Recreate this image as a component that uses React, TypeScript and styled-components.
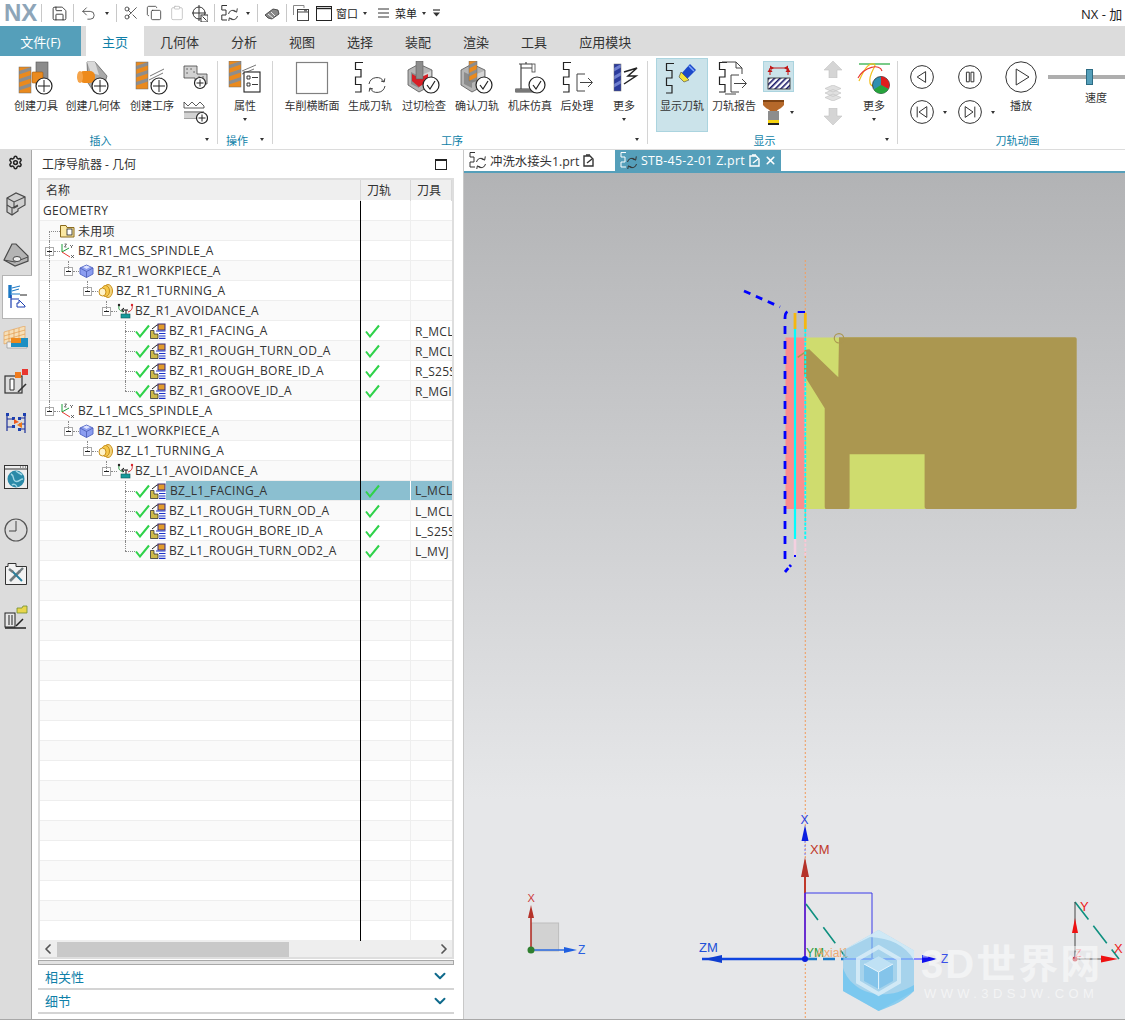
import React from "react";
import styled, { createGlobalStyle } from "styled-components";
import { Save, Undo2, Scissors, Copy, Clipboard, ChevronDown, ChevronLeft, ChevronRight, Settings, X } from "lucide-react";

const FONT = `"Open Sans", "Noto Sans CJK SC", sans-serif`;
const TEAL = "#559fba";

const Global = createGlobalStyle`
  html, body { margin: 0; padding: 0; background: #fff; overflow: hidden; }
  body { font-family: ${FONT}; color: #333; }
  * { box-sizing: border-box; }
`;

const Page = styled.div`
  width: 1125px; height: 1022px; display: flex; flex-direction: column; overflow: hidden;
`;
const TitleBar = styled.div`
  height: 26px; flex: none; display: flex; align-items: center; background: #fff; font-size: 11px; color: #222;
`;
const Logo = styled.div`
  width: 41px; padding-left: 4px; font-family: "Liberation Sans", sans-serif; font-weight: 700; font-size: 24px;
  letter-spacing: 0; color: #8ea5b8;
`;
const BarSep = styled.i<{ $l?: number }>`
  width: 1px; height: 18px; background: #c8c8c8; margin-left: ${(p) => p.$l ?? 0}px; flex: none;
`;
const Tool = styled.span<{ $l: number }>`
  display: inline-flex; align-items: center; margin-left: ${(p) => p.$l}px; flex: none; white-space: nowrap; color: #222;
`;
const Caret = styled.i<{ $c?: string }>`
  display: inline-block; flex: none; width: 0; height: 0; border-left: 2.5px solid transparent; border-right: 2.5px solid transparent;
  border-top: 3px solid ${(p) => p.$c ?? "#333"};
`;
const AppName = styled.div`
  margin-left: auto; font-size: 13px; color: #222; white-space: nowrap; width: 44px; overflow: hidden;
`;

const TabStrip = styled.div`
  height: 30px; flex: none; background: #dcdcdc; display: flex; font-size: 13px;
`;
const FileTab = styled.div`
  width: 81px; margin-right: 5px; background: ${TEAL}; color: #fff; display: flex; align-items: center; justify-content: center;
`;
const RibbonTab = styled.div<{ $on?: boolean }>`
  padding: 0 16px; display: flex; align-items: center; color: ${(p) => (p.$on ? "#0f7fa8" : "#333")};
  background: ${(p) => (p.$on ? "#fff" : "transparent")};
`;

const Ribbon = styled.div`
  height: 94px; flex: none; padding-top: 2px; display: flex; background: #fff; border-bottom: 1px solid #dcdcdc;
`;
const Group = styled.div<{ $w: number }>`
  width: ${(p) => p.$w}px; flex: none; display: flex; flex-direction: column;
`;
const GroupBody = styled.div<{ $pad?: number }>`
  height: 72px; display: flex; padding-left: ${(p) => p.$pad ?? 0}px;
`;
const GroupFoot = styled.div`
  height: 19px; display: flex; align-items: center; color: #0f7fa8; font-size: 11px;
`;
const GroupName = styled.div<{ $shift?: number }>`
  flex: 1; text-align: center; padding-left: ${(p) => p.$shift ?? 0}px;
`;
const FootCaret = styled(Caret)`
  margin: 0 8px 0 4px;
`;
const GroupSep = styled.i`
  width: 1px; flex: none; background: #d4d4d4; margin: 3px 0 5px;
`;
const RibbonBtn = styled.div<{ $w: number; $on?: boolean; $l?: number }>`
  width: ${(p) => p.$w}px; margin-left: ${(p) => p.$l ?? 0}px; height: 74px; flex: none; display: flex; flex-direction: column; align-items: center;
  padding-top: 2px; font-size: 11px; color: #333; white-space: nowrap; border: 1px solid ${(p) => (p.$on ? "#abd4df" : "transparent")};
  background: ${(p) => (p.$on ? "#cbe3ea" : "transparent")};
`;
const IconBox = styled.div`
  height: 34px; display: flex; align-items: center; justify-content: center;
`;
const BtnLabel = styled.div`
  line-height: 15px; margin-top: 3px;
`;
const BtnCaret = styled(Caret)`
  margin-top: 5px;
`;
const SmallStack = styled.div<{ $w: number; $gap: number; $top: number; $l?: number; $pl?: number }>`
  width: ${(p) => p.$w}px; margin-left: ${(p) => p.$l ?? 0}px; padding: ${(p) => p.$top}px 0 0 ${(p) => p.$pl ?? 0}px; flex: none;
  display: flex; flex-direction: column; align-items: ${(p) => (p.$pl ? "flex-start" : "center")}; gap: ${(p) => p.$gap}px;
`;
const HatchBtn = styled.div`
  width: 31px; height: 31px; background: #cbe3ea; border: 1px solid #abd4df; display: flex; align-items: center; justify-content: center;
`;
const CaretRow = styled.div<{ $gap: number }>`
  display: flex; align-items: center; gap: ${(p) => p.$gap}px;
`;
const PlayerCol = styled.div`
  width: 48px; flex: none; padding: 7px 0 0 12px; display: flex; flex-direction: column; gap: 11px;
`;
const PlayCol = styled.div`
  width: 54px; flex: none; padding-top: 3px; display: flex; flex-direction: column; align-items: center; font-size: 11px;
`;
const PlayLabel = styled.div`
  margin-top: 5px; line-height: 15px;
`;
const SpeedCol = styled.div`
  width: 78px; flex: none; padding-top: 11px; display: flex; flex-direction: column; font-size: 11px;
`;
const Track = styled.div`
  position: relative; height: 16px; display: flex; align-items: center;
  &::before { content: ""; flex: 1; height: 4px; background: #aeaeae; }
`;
const Thumb = styled.i`
  position: absolute; left: 38px; top: 0; width: 7px; height: 16px; background: ${TEAL}; border: 1px solid #2d6c84;
`;
const SpeedLabel = styled.div`
  margin-top: 5px; line-height: 15px; text-align: center; padding-left: 18px;
`;

const Main = styled.div`
  height: 870px; flex: none; display: flex; border-bottom: 1px solid #a8a8a8;
`;
const Rail = styled.div`
  width: 32px; flex: none; background: #dcdcdc; border-right: 1px solid #a8a8a8;
`;
const RailItem = styled.div<{ $h: number; $on?: boolean }>`
  height: ${(p) => p.$h}px; display: flex; align-items: center; justify-content: center;
  ${(p) => p.$on && `background:#fff; margin:0 -1px 0 2px; border:1px solid #b4b4b4; border-right:none;`}
`;
const NavPanel = styled.div`
  width: 432px; flex: none; background: #fff; border-right: 1px solid #c8c8c8; padding-left: 6px; padding-right: 9px; display: flex; flex-direction: column;
`;
const NavHead = styled.div`
  height: 28px; flex: none; display: flex; align-items: center; justify-content: space-between; padding: 0 7px 0 4px; font-size: 12px; color: #333;
`;
const MaxBtn = styled.i`
  width: 12px; height: 11px; border: 1px solid #222; border-top-width: 2px; display: block;
`;
const TreeTable = styled.div`
  height: 781px; flex: none; border: 2px solid #dedede; display: flex; flex-direction: column; font-size: 12px; color: #333;
`;
const Columns = "321px 50px 1fr";
const HeadRow = styled.div`
  height: 21px; flex: none; display: grid; grid-template-columns: ${Columns}; background: linear-gradient(#efefef 20px, #fff 20px);
`;
const HeadCell = styled.div<{ $pad: number }>`
  padding-left: ${(p) => p.$pad}px; padding-bottom: 1px; display: flex; align-items: center; border-right: 1px solid #d8d8d8; overflow: hidden; white-space: nowrap;
`;
const Row = styled.div<{ $alt: boolean }>`
  height: 20px; flex: none; display: grid; grid-template-columns: ${Columns}; background: ${(p) => (p.$alt ? "#fafafa" : "#fff")};
  box-shadow: inset 0 -1px 0 #eeeeee;
`;
const NameCell = styled.div<{ $pad: number }>`
  position: relative; display: flex; align-items: center; padding-left: ${(p) => p.$pad}px; border-right: 1px solid #000; white-space: nowrap; min-width: 0;
  letter-spacing: 0.28px;
`;
const Guide = styled.i<{ $x: number; $part: string }>`
  position: absolute; left: ${(p) => p.$x}px; width: 0; border-left: 1px dotted #8a8a8a;
  top: ${(p) => (p.$part === "b" ? "10px" : "0")}; bottom: ${(p) => (p.$part === "t" ? "10px" : "0")};
`;
const Expander = styled.i`
  width: 9px; height: 9px; border: 1px solid #aaa; background: #fff; flex: none; display: flex; align-items: center; justify-content: center;
  &::after { content: ""; width: 5px; height: 1px; background: #222; }
`;
const Connector = styled.i<{ $w: number }>`
  width: ${(p) => p.$w}px; flex: none; border-top: 1px dotted #8a8a8a;
`;
const RowName = styled.span<{ $sel?: boolean; $tight?: boolean }>`
  margin-left: ${(p) => (p.$tight ? -2 : 0)}px; align-self: stretch; display: flex; align-items: center; flex: 1; padding-left: ${(p) => (p.$sel ? 4 : 3)}px;
  background: ${(p) => (p.$sel ? "#8bbfd0" : "transparent")}; margin-bottom: 1px;
`;
const StatusCell = styled.div<{ $sel?: boolean }>`
  display: flex; align-items: center; padding-left: 4px; border-right: 1px solid ${(p) => (p.$sel ? "#fff" : "#eee")};
  background: ${(p) => (p.$sel ? "#8bbfd0" : "transparent")}; margin-bottom: ${(p) => (p.$sel ? 1 : 0)}px;
`;
const ToolCell = styled.div<{ $sel?: boolean }>`
  padding-left: 4px; display: flex; align-items: center; overflow: hidden; white-space: nowrap; min-width: 0; letter-spacing: 0.28px;
  background: ${(p) => (p.$sel ? "#8bbfd0" : "transparent")}; margin-bottom: ${(p) => (p.$sel ? 1 : 0)}px;
`;
const HScroll = styled.div`
  height: 16px; flex: none; background: #eeeeee; display: flex; align-items: center; color: #555;
`;
const HThumb = styled.i`
  width: 232px; height: 15px; background: #c9c9c9; margin-left: 1px; flex: none;
`;
const ScrollFill = styled.i`
  flex: 1;
`;
const Splitter = styled.div`
  height: 5px; flex: none; margin-top: 1px; background: #e2e2e2; border: 1px solid #a8a8a8;
`;
const Section = styled.div`
  height: 24.5px; flex: none; display: flex; align-items: center; justify-content: space-between; padding: 0 5px 0 7px; font-size: 13px; color: #0f7fa8;
  border-bottom: 2px solid #d4d4d4;
`;

const Viewport = styled.div`
  flex: 1; min-width: 0; display: flex; flex-direction: column;
`;
const DocTabs = styled.div`
  height: 23px; flex: none; display: flex; padding-left: 4px; background: #fff; border-bottom: 2px solid ${TEAL}; font-size: 12.4px;
`;
const DocTab = styled.div<{ $w: number; $on?: boolean }>`
  width: ${(p) => p.$w}px; flex: none; display: flex; align-items: center; gap: 4px; padding-left: ${(p) => (p.$on ? 5 : 1)}px;
  background: ${(p) => (p.$on ? TEAL : "#fff")}; color: ${(p) => (p.$on ? "#fff" : "#333")}; white-space: nowrap;
  letter-spacing: ${(p) => (p.$on ? 0.25 : 0)}px;
`;
const Canvas = styled.div`
  flex: 1; min-height: 0; background: linear-gradient(#b2b3b5 0%, #e6e7e9 74%);
`;
const Scene = styled.svg`
  display: block; width: 100%; height: 100%;
`;
const SceneText = styled.text<{ $s?: number }>`
  font-family: "Liberation Sans", "Noto Sans CJK SC", sans-serif; font-size: ${(p) => p.$s ?? 12}px;
`;

/* ---------- icon helpers ---------- */
type P = { children?: React.ReactNode; w?: number; h?: number };
const Ico = ({ children, w = 36, h = 34 }: P) => (
  <svg width={w} height={h} viewBox={`0 0 ${w} ${h}`} style={{ display: "block", flex: "none" }}>{children}</svg>
);
const Mill = ({ x, y, w = 12, h = 26, c = "#ea8a1e", s = "#8d8d8d" }: { x: number; y: number; w?: number; h?: number; c?: string; s?: string }) => (
  <g transform={`translate(${x} ${y})`}>
    <rect width={w} height={h} fill={c} />
    {[0, 8, 16].map((d) => (
      <path key={d} d={`M0 ${d + 4}L${w} ${d}V${d + 3.5}L0 ${d + 7.5}Z`} fill={s} />
    ))}
    <rect width={w} height={h} fill="none" stroke="#6b6b6b" strokeWidth=".5" />
  </g>
);
const Plus = ({ x, y, r = 8 }: { x: number; y: number; r?: number }) => (
  <g>
    <circle cx={x} cy={y} r={r} fill="#fff" stroke="#222" strokeWidth="1.2" />
    <path d={`M${x - r + 2} ${y}H${x + r - 2}M${x} ${y - r + 2}V${y + r - 2}`} stroke="#222" strokeWidth="1" />
  </g>
);
const Check = ({ x, y, r = 8 }: { x: number; y: number; r?: number }) => (
  <g>
    <circle cx={x} cy={y} r={r} fill="#fff" stroke="#222" strokeWidth="1.2" />
    <path d={`M${x - 4} ${y}l3 4l5 -8`} fill="none" stroke="#222" strokeWidth="1.2" />
  </g>
);
const Flow = ({ x, y, s = 1, c = "#222", sw = 1.2 }: { x: number; y: number; s?: number; c?: string; sw?: number }) => (
  <path transform={`translate(${x} ${y}) scale(${s})`} d="M9 .5H1.5V7.5H7V15H1.5V22.5H7V30H1" fill="none" stroke={c} strokeWidth={sw} />
);
const Cycle = ({ x, y, r = 7, c = "#444" }: { x: number; y: number; r?: number; c?: string }) => (
  <g fill="none" stroke={c} strokeWidth="1">
    <path d={`M${x - r} ${y - 1}A${r} ${r} 0 0 1 ${x + r - 1} ${y - 3}`} />
    <path d={`M${x + r} ${y + 1}A${r} ${r} 0 0 1 ${x - r + 1} ${y + 3}`} />
    <path d={`M${x + r - 4} ${y - 4}l3.2 1l.6 -3.6`} />
    <path d={`M${x - r + 4} ${y + 4}l-3.2 -1l-.6 3.6`} />
  </g>
);
const ArrowBox = ({ x, y }: { x: number; y: number }) => (
  <path transform={`translate(${x} ${y})`} d="M8 0H0V17H8M3 8.5H15M11 4L15.5 8.5L11 13" fill="none" stroke="#444" strokeWidth="1" />
);
const GrayBox = () => (
  <g>
    <path d="M2 9L13 3L26 9V24L13 31L2 24Z" fill="#b5b5b5" stroke="#555" strokeWidth=".8" />
    <path d="M5 11L13 15V27L5 23Z" fill="#8c8c8c" />
    <path d="M13 15L25 10V16L13 21Z" fill="#d6d6d6" />
  </g>
);

const IcoCreateTool = () => (
  <Ico><Mill x={1} y={6} /><rect x={18} y={1} width={12} height={22} fill="#8b8b8b" stroke="#555" strokeWidth=".6" /><rect x={14} y={11} width={11} height={11} rx={1} fill="#ea8a1e" stroke="#a05a10" strokeWidth=".6" /><Plus x={26} y={25} /></Ico>
);
const IcoCreateGeo = () => (
  <Ico><path d="M12 1H20L32 15L27 31H19L13 22Z" fill="#a9a9a9" stroke="#555" strokeWidth=".7" /><path d="M12 1H20L24 14L16 12Z" fill="#d9d9d9" /><rect x={4} y={10} width={16} height={12} rx={5} fill="#ee8a1a" /><ellipse cx={5} cy={16} rx={3} ry={6} fill="#f5a44a" /><Plus x={25} y={25} /></Ico>
);
const IcoCreateOp = () => (
  <Ico><Mill x={2} y={1} h={27} /><path d="M16 15L30 8M15 19L29 12M16 22L28 17" stroke="#777" strokeWidth="1" /><Plus x={25} y={25} /></Ico>
);
const IcoSheetPlus = () => (
  <Ico w={26} h={26}><path d="M2 2H15V10H25V20H13V14H2Z" fill="#d2d2d2" stroke="#444" strokeWidth=".8" /><path d="M5 5h.1M9 5h.1M12 8h.1M5 9h.1M17 13h.1M21 13h.1" stroke="#555" strokeWidth="1.4" strokeLinecap="round" /><Plus x={18} y={19} r={5.5} /></Ico>
);
const IcoCrownPlus = () => (
  <Ico w={26} h={26}><path d="M2 3L6 7L10 3L14 7L18 3L22 7V9H2Z" fill="#fff" stroke="#333" strokeWidth=".8" /><path d="M2 13H22M2 19H15" stroke="#333" strokeWidth=".9" /><rect x={2} y={14} width={17} height={5} fill="#d2d2d2" /><Plus x={20} y={19} r={5.5} /></Ico>
);
const IcoProps = () => (
  <Ico w={34}><Mill x={1} y={0} h={26} /><path d="M14 10L28 4M14 13L26 8" stroke="#777" strokeWidth="1" /><rect x={16} y={11} width={16} height={20} fill="#fff" stroke="#222" strokeWidth="1.1" /><path d="M19 15h3v3h-3zM19 22h3v3h-3zM24 16.5h6M24 23.5h6" fill="none" stroke="#222" strokeWidth=".9" /></Ico>
);
const IcoSquare = () => (
  <Ico><rect x={2.5} y={1.5} width={31} height={31} fill="#fff" stroke="#808080" strokeWidth="1.2" /></Ico>
);
const IcoGen = () => (
  <Ico><Flow x={2} y={1} /><Cycle x={25} y={24} r={8} /></Ico>
);
const IcoGouge = () => (
  <Ico><GrayBox /><path d="M6 13L13 17L22 13V20L13 26L6 20Z" fill="#d81f26" /><rect x={10} y={0} width={7} height={18} fill="#8d8d8d" stroke="#555" strokeWidth=".5" /><Check x={25} y={24} /></Ico>
);
const IcoVerify = () => (
  <Ico><GrayBox /><Mill x={10} y={0} w={8} h={20} /><Check x={25} y={24} /></Ico>
);
const IcoSim = () => (
  <Ico><path d="M4 31H26V28H4ZM9 28V3H7V3H20M14 3V1M9 7H20M21 4V11" fill="none" stroke="#444" strokeWidth="1.2" /><rect x={3} y={28} width={24} height={3} fill="#777" /><rect x={20} y={3} width={3} height={8} fill="#fff" stroke="#444" strokeWidth=".8" /><Check x={25} y={24} /></Ico>
);
const IcoPost = () => (
  <Ico><Flow x={3} y={1} /><ArrowBox x={18} y={13} /></Ico>
);
const IcoMoreOp = () => (
  <Ico><Mill x={8} y={3} w={7} h={27} c="#2a3a9c" s="#6f7fd0" /><path d="M18 11L31 7L22 15H30L18 23" fill="none" stroke="#222" strokeWidth="1.5" /></Ico>
);
const IcoShowPath = () => (
  <Ico w={40}><Flow x={3} y={2} /><path d="M19 13L28 3L34 9L25 18Z" fill="#1c49c9" /><path d="M19 11L27 19L22 21L17 16Z" fill="#f2e13a" stroke="#444" strokeWidth=".6" /><path d="M27 5L32 10" stroke="#7ea7ff" strokeWidth="1.5" /></Ico>
);
const IcoReport = () => (
  <Ico><Flow x={2} y={1} /><path d="M6 1H20L26 7V13M20 1V7H26" fill="none" stroke="#444" strokeWidth="1" /><path d="M9 33H20" stroke="#444" strokeWidth="1" /><ArrowBox x={15} y={14} /></Ico>
);
const IcoHatch = () => (
  <Ico w={26} h={28}>
    <defs><pattern id="ht" width="4" height="4" patternUnits="userSpaceOnUse" patternTransform="rotate(-45)"><rect width="4" height="4" fill="#fff" /><rect width="4" height="1.6" fill="#1a1a6a" /></pattern></defs>
    <path d="M4 5H22M4 5V12M22 5V12" fill="none" stroke="#c01717" strokeWidth="1" /><path d="M1.5 9H6.5L4 5ZM19.5 9H24.5L22 5ZM4 2.5L8 5L4 7.5ZM22 2.5L18 5L22 7.5Z" fill="#c01717" />
    <rect x={2} y={15} width={22} height={11} fill="url(#ht)" stroke="#222" strokeWidth=".8" />
  </Ico>
);
const IcoHolder = () => (
  <Ico w={21} h={25}><path d="M0 1H21V5C18 9 15 9 14 11H7C6 9 3 9 0 5Z" fill="#b5682a" /><rect x={0} y={0} width={21} height={2} fill="#7d4213" /><rect x={5} y={11} width={11} height={9} fill="#8d8d8d" /><rect x={5} y={20} width={11} height={3} fill="#f5d20f" /><rect x={5} y={23} width={11} height={2} fill="#222" /></Ico>
);
const IcoUp = ({ flip }: { flip?: boolean }) => (
  <Ico w={18} h={17}><path d={flip ? "M5 0H13V8H18L9 17L0 8H5Z" : "M9 0L18 9H13V17H5V9H0Z"} fill="#d5d5d5" stroke="#c4c4c4" strokeWidth=".6" /></Ico>
);
const IcoLayers = () => (
  <Ico w={18} h={16}><path d="M9 0L17 3.5L9 7L1 3.5Z M9 4.5L17 8L9 11.5L1 8Z M9 9L17 12.5L9 16L1 12.5Z" fill="#e0e0e0" stroke="#c4c4c4" strokeWidth=".7" /></Ico>
);
const IcoColors = () => (
  <Ico>
    <path d="M3 3H34" stroke="#1fa83a" strokeWidth="1.2" /><path d="M3 20C10 4 14 2 18 3C22 4 12 12 14 22C15 26 20 26 22 23" fill="none" stroke="#f2c11d" strokeWidth="1.2" /><path d="M2 17C8 6 24 2 26 10" fill="none" stroke="#e8362f" strokeWidth="1.1" />
    <circle cx={25} cy={24} r={8.5} fill="#2f8fb0" stroke="#222" strokeWidth=".7" /><path d="M25 24V15.5A8.5 8.5 0 0 1 32.4 28Z" fill="#e01d1d" /><path d="M25 24L32.4 28A8.5 8.5 0 0 1 17.8 28.5Z" fill="#27a33c" />
  </Ico>
);
const Round = ({ size = 24, kind }: { size?: number; kind: "prev" | "pause" | "play" | "first" | "last" }) => {
  const k = size / 20;
  return (
    <svg width={size} height={size} viewBox="0 0 20 20" style={{ display: "block", flex: "none" }}>
      <circle cx={10} cy={10} r={9.5} fill="#fff" stroke="#333" strokeWidth={1 / k} />
      <g fill="none" stroke="#333" strokeWidth={1 / k}>
        {kind === "prev" && <path d="M13 5.5V14.5L6 10Z" />}
        {kind === "play" && <path d="M7 5V15L15 10Z" />}
        {kind === "pause" && <path d="M7 6h2.4v8H7zM10.8 6h2.4v8h-2.4z" />}
        {kind === "first" && <path d="M14 5.5V14.5L7.5 10ZM6 5.5V14.5" />}
        {kind === "last" && <path d="M6 5.5V14.5L12.5 10ZM14 5.5V14.5" />}
      </g>
    </svg>
  );
};

/* top toolbar */
const IcoMove = () => (
  <Ico w={16} h={18}><circle cx={7} cy={9} r={6} fill="none" stroke="#333" /><path d="M7 1V17M0 9H14" stroke="#333" /><rect x={9} y={11} width={7} height={7} fill="#fff" stroke="#333" /><path d="M10.5 12.5L14.5 16.5" stroke="#333" /></Ico>
);
const IcoFlowCycle = () => (
  <Ico w={17} h={16}><path d="M6 .5H.8V5H5V10H.8V15H6" fill="none" stroke="#333" /><Cycle x={12} y={10} r={4.5} /></Ico>
);
const IcoPencil = () => (
  <Ico w={16} h={14}><path d="M1 9L9 3L14 4L15 8L8 13L4 12Z" fill="#888" stroke="#333" strokeWidth=".8" /><path d="M4 8L9 12M7 6L11 10" stroke="#eee" /></Ico>
);
const IcoWinStack = () => (
  <Ico w={16} h={16}><path d="M.5 10V.5H11V3" fill="none" stroke="#888" /><rect x={4.5} y={4.5} width={11} height={11} fill="#fff" stroke="#444" /><path d="M4.5 7H15.5" stroke="#444" /><path d="M11 5.8h3" stroke="#444" /></Ico>
);
const IcoWin = () => (
  <Ico w={16} h={16}><rect x={.5} y={1.5} width={15} height={14} fill="#fff" stroke="#222" /><path d="M.5 3.5H15.5" stroke="#222" strokeWidth="1.4" /></Ico>
);
const IcoMenu = () => (
  <Ico w={11} h={10}><path d="M0 1H11M0 5H11M0 9H11" stroke="#333" /></Ico>
);
const IcoOverflow = () => (
  <Ico w={7} h={8}><path d="M0 1H7" stroke="#333" strokeWidth="1.2" /><path d="M0 3.5H7L3.5 7.5Z" fill="#333" /></Ico>
);

/* rail */
const RailBlocks = () => (
  <Ico w={20} h={24}><path d="M1 6L10 1L19 5V13L12 17V19L6 23L1 20Z" fill="#cfcfcf" stroke="#4a4a4a" strokeWidth="1.2" /><path d="M1 6L8 10L19 5M8 10V16L12 14M1 13L6 16V23M6 16L12 13" fill="none" stroke="#4a4a4a" strokeWidth="1.1" /></Ico>
);
const RailBracket = () => (
  <Ico w={26} h={24}><path d="M1 17L9 1H13L25 13V18L12 23Z" fill="#b4b4b4" stroke="#4a4a4a" strokeWidth="1.2" /><path d="M1 17L12 19L25 14" fill="none" stroke="#4a4a4a" /><ellipse cx={14} cy={16} rx={4} ry={2.5} fill="#eee" stroke="#4a4a4a" /></Ico>
);
const RailNav = () => (
  <Ico w={22} h={24}><path d="M3 0V13" stroke="#1b78c5" strokeWidth="3.4" /><path d="M5 3L13 1M5 6L12 4M5 9H13" stroke="#1b78c5" /><path d="M13 10H20" stroke="#222" /><path d="M4 14H12M4 10V23" stroke="#1c3fb0" strokeWidth="1.2" /><path d="M10 18H12V15L18 21V22H10Z" fill="#fff" stroke="#1c3fb0" /></Ico>
);
const RailGrid = () => (
  <Ico w={26} h={24}><path d="M1 6L22 0V12L1 18Z" fill="#f6dfb8" stroke="#e0913b" strokeWidth=".5" /><path d="M6 5V17M11 3V16M16 2V14M1 10L22 4M1 14L22 8" stroke="#e0913b" strokeWidth=".6" /><path d="M4 16H24V22H4Z" fill="#f0f0f0" stroke="#777" strokeWidth=".5" /><rect x={8} y={12} width={17} height={9} fill="#1d8fc3" /><rect x={8} y={12} width={10} height={5} fill="#ef8a1c" /></Ico>
);
const RailMachine = () => (
  <Ico w={24} h={26}><rect x={1} y={7} width={17} height={17} fill="#dcdcdc" stroke="#333" strokeWidth="1.2" /><path d="M6 10V21H10V10Z" fill="#fff" stroke="#333" /><path d="M14 23L22 15" stroke="#333" strokeWidth="1.6" /><path d="M11 3H17V9H11Z" fill="#ef7a1c" /><path d="M18 0H24V6H18Z" fill="#e8362f" /></Ico>
);
const RailNet = () => (
  <Ico w={24} h={24}><path d="M3 3V20M3 8H9M3 16H9M21 3V22M15 7H21M15 13H21M15 18H21" stroke="#1c2f99" strokeWidth="1.2" /><path d="M2 2h3v3H2zM8 6h3v3H8zM8 14h3v3H8zM19 2h3v3h-3zM14 6h3v3h-3zM14 17h3v3h-3z" fill="#1c3fb0" /><path d="M10 8L15 11L10 13Z" fill="#ef5b1c" /><path d="M18 11L13 14L18 17Z" fill="#ef7a1c" /></Ico>
);
const RailGlobe = () => (
  <Ico w={24} h={24}><rect x={.5} y={.5} width={23} height={23} fill="#eee" stroke="#333" /><path d="M.5 4H23.5" stroke="#333" /><path d="M16 2h1M18.5 2h1M21 2h1" stroke="#333" /><circle cx={12} cy={14} r={8.5} fill="#2a8aa8" /><path d="M7 9C11 11 8 14 11 16C14 18 16 14 19 14M12 6C14 8 16 8 18 10M8 20C10 18 12 20 13 22" fill="none" stroke="#9fd6e4" strokeWidth="1.4" /></Ico>
);
const RailClock = () => (
  <Ico w={24} h={24}><circle cx={12} cy={12} r={11} fill="#dcdcdc" stroke="#555" strokeWidth="1.2" /><path d="M12 3V13H5" fill="none" stroke="#444" /></Ico>
);
const RailTools = () => (
  <Ico w={22} h={22}><path d="M.5 3.5H3V.5H11V3.5H21.5V21.5H.5Z" fill="#f2f2f2" stroke="#333" /><path d="M5 18L15 8" stroke="#6f7a7e" strokeWidth="2.6" /><path d="M17 18L7 8" stroke="#2a7f9c" strokeWidth="2" /><path d="M4 6L8 9M18 5L14 9" stroke="#6f7a7e" strokeWidth="2.4" /></Ico>
);
const RailFolder = () => (
  <Ico w={24} h={24}><rect x={1} y={8} width={10} height={14} fill="#e8e8e8" stroke="#222" /><path d="M5 10V20M8 10V20" stroke="#222" /><path d="M12 21L19 14M1 23H22" stroke="#222" strokeWidth="1.5" /><path d="M13 3H18L19 1H23V8H13Z" fill="#e9d64c" stroke="#6e8e2e" strokeWidth=".8" /></Ico>
);

/* tree */
const IcoFolder = () => (
  <Ico w={15} h={14}><path d="M.5 1.5H6L7 3.5H14V13H.5Z" fill="#fbe8a2" stroke="#8a6a1c" /><rect x={7} y={5} width={5} height={6} fill="#fff" stroke="#222" strokeWidth=".8" /></Ico>
);
const IcoMcs = () => (
  <Ico w={15} h={16}><path d="M2 1V9" stroke="#1c9c3a" /><path d="M2 9L9 5" stroke="#1c9c3a" /><path d="M2 9L10 14" stroke="#e8362f" /><path d="M4.5 1h2l-2 3h2M10 2l1.5 1.5L13 2M11.5 3.5V5M11 12l3 3M14 12l-3 3" fill="none" stroke="#333" strokeWidth=".7" /></Ico>
);
const IcoCube = () => (
  <Ico w={15} h={14}><path d="M7.5 1L14 4V10L7.5 13.5L1 10V4Z" fill="#8b9df0" stroke="#5a6dc8" /><path d="M1 4L7.5 7.5L14 4M7.5 7.5V13.5" fill="none" stroke="#3f50a8" strokeWidth=".7" /><path d="M4 3L7.5 1.5L11 3L7.5 5Z" fill="#dfe4ff" /></Ico>
);
const IcoRings = () => (
  <Ico w={15} h={14}><ellipse cx={10} cy={7} rx={4.5} ry={6.5} fill="#f3d37a" stroke="#c8901c" /><ellipse cx={7.5} cy={7} rx={4} ry={5.5} fill="#f7c84a" stroke="#c8901c" /><ellipse cx={4.5} cy={8} rx={3.5} ry={4} fill="#fff3c9" stroke="#c8901c" /></Ico>
);
const IcoAvoid = () => (
  <Ico w={17} h={16}><path d="M2 3C1 7 4 8 6 9" fill="none" stroke="#1c9c3a" /><path d="M15 2C16 6 14 8 11 9" fill="none" stroke="#d8262c" /><circle cx={2} cy={2} r={1.2} fill="#222" /><circle cx={15} cy={2} r={1.2} fill="#d8262c" /><path d="M11 7H5M7 5L4.5 7L7 9M9 7V11" fill="none" stroke="#111" /><rect x={4} y={11} width={9} height={4} fill="#169a9a" stroke="#0c5c5c" strokeWidth=".6" /></Ico>
);
const IcoOp = () => (
  <Ico w={16} h={16}><path d="M.5 7.5H4V11H8V15.5H.5Z" fill="#cdb94a" stroke="#222" strokeWidth=".7" /><path d="M2 6L7 2H9" fill="none" stroke="#222" /><rect x={8} y={1} width={7} height={6} fill="#e29c2c" stroke="#3a2a7c" /><path d="M6 8H15.5M9 10.5H15.5M9 13H15.5M9 15.3H15.5" stroke="#1c32c8" strokeWidth="1.2" /></Ico>
);
const GreenCheck = () => (
  <Ico w={15} h={14}><path d="M1 7.5L5 12.5L14 1.5" fill="none" stroke="#2fd24a" strokeWidth="2" /></Ico>
);
const IcoDoc = ({ c }: { c: string }) => (
  <Ico w={11} h={13}><path d="M1 2H7L10 5V12H1Z" fill="none" stroke={c} strokeWidth="1.4" /><path d="M3 1H7M4 9L9 5" stroke={c} strokeWidth="1.4" /></Ico>
);
const IcoDocFlow = ({ c }: { c: string }) => (
  <Ico w={17} h={17}><path d="M6 .5H1V5H5V10H1V15H6" fill="none" stroke={c} /><Cycle x={12} y={11} r={4.5} c={c === "#fff" ? "#333" : c} /></Ico>
);

/* data */
type R = { k: "root" | "unused" | "node" | "op"; name: string; level?: number; tool?: string; icon?: React.ReactNode; guides?: [number, string][]; sel?: boolean };
const spine: [number, string] = [9, "f"];
const tree = (p: string, ops: string[], tools: string[], last: boolean, sel: number): R[] => {
  const g = last ? [] : [spine];
  const out: R[] = [
    { k: "node", level: 0, name: `BZ_${p}_MCS_SPINDLE_A`, icon: <IcoMcs />, guides: last ? [[9, "t"]] : [spine] },
    { k: "node", level: 1, name: `BZ_${p}_WORKPIECE_A`, icon: <IcoCube />, guides: [...g, [28, "t"]] },
    { k: "node", level: 2, name: `BZ_${p}_TURNING_A`, icon: <IcoRings />, guides: [...g, [47, "t"]] },
    { k: "node", level: 3, name: `BZ_${p}_AVOIDANCE_A`, icon: <IcoAvoid />, guides: [...g, [66, "t"]] },
  ];
  ops.forEach((name, i) =>
    out.push({ k: "op", name, tool: tools[i], sel: i === sel, guides: [...g, [85, i === ops.length - 1 ? "t" : "f"]] }),
  );
  return out;
};
const rows: R[] = [
  { k: "root", name: "GEOMETRY" },
  { k: "unused", name: "未用项", guides: [[9, "b"]] },
  ...tree("R1", ["BZ_R1_FACING_A", "BZ_R1_ROUGH_TURN_OD_A", "BZ_R1_ROUGH_BORE_ID_A", "BZ_R1_GROOVE_ID_A"], ["R_MCL", "R_MCL", "R_S25S", "R_MGI"], false, -1),
  ...tree("L1", ["BZ_L1_FACING_A", "BZ_L1_ROUGH_TURN_OD_A", "BZ_L1_ROUGH_BORE_ID_A", "BZ_L1_ROUGH_TURN_OD2_A"], ["L_MCL", "L_MCL", "L_S25S", "L_MVJ"], true, 0),
];
const blanks = Array.from({ length: 37 - rows.length });

const railItems: [number, React.ReactNode, boolean?][] = [
  [24, <Settings size={15} color="#222" strokeWidth={2.4} />],
  [60, <RailBlocks />],
  [41, <RailBracket />],
  [44, <RailNav />, true],
  [38, <RailGrid />],
  [50, <RailMachine />],
  [32, <RailNet />],
  [76, <RailGlobe />],
  [30, <RailClock />],
  [58, <RailTools />],
  [28, <RailFolder />],
];

const tabs = ["几何体", "分析", "视图", "选择", "装配", "渲染", "工具", "应用模块"];

const Btn = ({ w, label, icon, caret, on, l }: { w: number; label: string; icon: React.ReactNode; caret?: boolean; on?: boolean; l?: number }) => (
  <RibbonBtn $w={w} $on={on} $l={l}>
    <IconBox>{icon}</IconBox>
    <BtnLabel>{label}</BtnLabel>
    {caret && <BtnCaret />}
  </RibbonBtn>
);

const TreeRow = ({ r, alt }: { r: R; alt: boolean }) => {
  const lvl = r.level ?? 0;
  const pad = r.k === "root" ? 0 : r.k === "unused" ? 9 : r.k === "op" ? 85 : 5 + 19 * lvl;
  return (
    <Row $alt={alt}>
      <NameCell $pad={pad}>
        {r.guides?.map(([x, part], i) => <Guide key={i} $x={x} $part={part} />)}
        {r.k === "unused" && (<><Connector $w={11} /><IcoFolder /></>)}
        {r.k === "node" && (<><Expander /><Connector $w={6} />{r.icon}</>)}
        {r.k === "op" && (<><Connector $w={10} /><GreenCheck /><IcoOp /></>)}
        <RowName $sel={r.sel} $tight={r.k === "node" && lvl === 3}>{r.name}</RowName>
      </NameCell>
      <StatusCell $sel={r.sel}>{r.tool && <GreenCheck />}</StatusCell>
      <ToolCell $sel={r.sel}>{r.tool}</ToolCell>
    </Row>
  );
};

const CadScene = () => (
  <Scene viewBox="464 173 661 846" preserveAspectRatio="none">
    <path d="M805.3 260V1020" stroke="#f0a066" strokeWidth="1.1" strokeDasharray="2 2" />
    <rect x={806} y={337.5} width={119} height={171.5} fill="#cfdc6e" />
    <rect x={785.5} y={337.5} width={19} height={171.5} fill="#fc8d8d" />
    <path d="M839 337.3H1075Q1076.7 337.3 1076.7 339V507Q1076.7 509 1075 509H926.5Q924.6 509 924.6 507V454.3H849.6V507Q849.6 509 848 509H826Q824.7 509 824.7 507V408.3L804 375V351Q805 349.3 809.3 349.3L838.3 377.3Z" fill="#ab9750" />
    <path d="M797.7 357.3L807.3 350.7" stroke="#ab9750" strokeWidth="1.5" />
    <circle cx={839} cy={338.3} r={4.7} fill="none" stroke="#ab9750" strokeWidth="1.2" />
    <path d="M795 329V539" stroke="#00ffff" strokeWidth="2.2" />
    <path d="M805.3 329V540" stroke="#00ffff" strokeWidth="1.8" strokeDasharray="3 1.5" />
    <path d="M795 313V329M805.3 313V329" stroke="#f5b70f" strokeWidth="2.8" />
    <path d="M795 539V556" stroke="#f4d0e0" strokeWidth="2.6" />
    <path d="M805.3 539V556" stroke="#f7c8d8" strokeWidth="2" strokeDasharray="3 1.5" />
    <g fill="none" stroke="#0000ff" strokeWidth="2.8">
      <path d="M744 291L780 307" strokeDasharray="7 6" />
      <path d="M785 559V318Q785 311 790 311L793 312" strokeDasharray="8 7" />
      <path d="M797.7 312H805" strokeWidth="2" />
      <path d="M785 572L791 565" strokeDasharray="5 2" />
      <path d="M794 556H796" strokeWidth="2" />
    </g>

    {/* left triad */}
    <rect x={531.6} y={923} width={27} height={28} fill="#d2d2d2" stroke="#bdbdbd" strokeWidth="1" />
    <path d="M531 949V915" stroke="#b5332a" strokeWidth="1.6" />
    <path d="M528 918L531 905L534 918Z" fill="#b5332a" />
    <path d="M531 950H566" stroke="#2a6ae0" strokeWidth="1.5" />
    <path d="M564 947L577 950L564 953Z" fill="#1f5fe0" />
    <circle cx={531} cy={950} r={3.5} fill="#2f7f2f" />
    <SceneText x={527.5} y={902} fill="#cc3a3a" $s={11}>X</SceneText>
    <SceneText x={578} y={954} fill="#2a5fe0" $s={12}>Z</SceneText>

    {/* centre triad */}
    <path d="M805 841V857" stroke="#7a7af5" strokeWidth="1" strokeDasharray="2 2" />
    <path d="M801.5 841L805 825L808.5 841Z" fill="#0a1ee0" />
    <SceneText x={800.5} y={824} fill="#2a3fe0" $s={12}>X</SceneText>
    <path d="M805 875V893" stroke="#c0392b" strokeWidth="2" />
    <path d="M801 877L805 857L809 877Z" fill="#b5332a" />
    <SceneText x={810} y={854} fill="#c0392b" $s={13}>XM</SceneText>
    <path d="M805 893V959" stroke="#6a2fd0" strokeWidth="2" />
    <path d="M805 893H872V961" fill="none" stroke="#3a3ae8" strokeWidth="1" />
    <path d="M806 904L847 959" stroke="#0f9080" strokeWidth="1.6" strokeDasharray="20 9" />
    <path d="M702 959H805" stroke="#0f45e0" strokeWidth="2.6" />
    <path d="M722 955L704 959L722 963Z" fill="#0f3ed0" />
    <SceneText x={699} y={952} fill="#2050d8" $s={13}>ZM</SceneText>
    <path d="M805 959H844" stroke="#1a78c8" strokeWidth="2.4" strokeDasharray="12 6" />
    <path d="M844 959H925" stroke="#8a8aff" strokeWidth="2" />
    <path d="M922 955L937 959L922 963Z" fill="#1010ee" />
    <SceneText x={941} y={963} fill="#3a50e8" $s={12}>Z</SceneText>
    <SceneText x={806} y={957} fill="#2a9c3a" $s={12}>YM</SceneText>
    <SceneText x={816} y={957} fill="#f0a060" $s={12} opacity=".85">Axial1</SceneText>
    <circle cx={805} cy={959} r={3} fill="#0a1ee0" />

    {/* right triad */}
    <path d="M1075 902L1119 959" stroke="#0f9080" strokeWidth="1.6" strokeDasharray="22 8" />
    <path d="M1075 902V959" stroke="#444" strokeWidth="1" />
    <path d="M1072 933L1075 918L1078 933Z" fill="#ee1111" />
    <path d="M1075 959H1101" stroke="#888" strokeWidth="1.5" />
    <path d="M1101 955.5L1118 959L1101 962.5Z" fill="#ee1111" />
    <circle cx={1075} cy={959} r={2.5} fill="#c0303a" />
    <SceneText x={1080} y={911} fill="#ee2222" $s={13}>Y</SceneText>
    <SceneText x={1114} y={953} fill="#ee2222" $s={13}>X</SceneText>
    <SceneText x={1075} y={957} fill="#f08a8a" $s={11}>Z</SceneText>

    {/* watermark */}
    <g>
      <path d="M878.6 930L914 950.5V991L878.6 1011L843 991V950.5Z" fill="#7cc6ee" opacity=".6" />
      <path d="M878.6 930L914 950.5V960C905 945 890 938 870 937L843 950.5Z" fill="#d4ebf7" opacity=".9" />
      <path d="M914 991C905 1000 895 1005 878.6 1011L843 991V968C850 990 880 1005 914 985Z" fill="#6cc4f0" opacity=".75" />
      <path d="M878.6 947L899 959V982L878.6 994L858 982V959Z" fill="none" stroke="#dceff9" strokeWidth="4" opacity=".8" />
      <path d="M878.6 956L893 964V981L878.6 989L864 981V964Z" fill="#84c4ea" />
      <path d="M878.6 956L893 964L878.6 972L864 964Z" fill="#bfe1f4" />
      <path d="M878.6 972V989M864 964L878.6 972L893 964" stroke="#e8f5fc" strokeWidth="1" fill="none" />
      <SceneText x={921} y={978} fill="#fff" opacity=".5" $s={40} fontWeight="700" letterSpacing="2">3D世界网</SceneText>
      <SceneText x={924} y={998} fill="#fff" opacity=".55" $s={13} letterSpacing="4.4">WWW.3DSJW.COM</SceneText>
    </g>
  </Scene>
);

export default function App() {
  return (
    <Page>
      <Global />
      <TitleBar>
        <Logo>NX</Logo>
        <BarSep />
        <Tool $l={9}><Save size={17} color="#222" strokeWidth={1.2} /></Tool>
        <BarSep $l={5} />
        <Tool $l={6}><Undo2 size={17} color="#333" strokeWidth={1.1} /></Tool>
        <Tool $l={8}><Caret /></Tool>
        <BarSep $l={7} />
        <Tool $l={6}><Scissors size={16} color="#333" strokeWidth={1.2} /></Tool>
        <Tool $l={7}><Copy size={16} color="#333" strokeWidth={1.2} /></Tool>
        <Tool $l={7}><Clipboard size={16} color="#bdbdbd" strokeWidth={1.2} /></Tool>
        <Tool $l={7}><IcoMove /></Tool>
        <BarSep $l={6} />
        <Tool $l={6}><IcoFlowCycle /></Tool>
        <Tool $l={8}><Caret /></Tool>
        <BarSep $l={7} />
        <Tool $l={6}><IcoPencil /></Tool>
        <BarSep $l={6} />
        <Tool $l={6}><IcoWinStack /></Tool>
        <Tool $l={7}><IcoWin /></Tool>
        <Tool $l={4}>窗口</Tool>
        <Tool $l={5}><Caret /></Tool>
        <Tool $l={11}><IcoMenu /></Tool>
        <Tool $l={6}>菜单</Tool>
        <Tool $l={5}><Caret /></Tool>
        <Tool $l={7}><IcoOverflow /></Tool>
        <AppName>NX - 加</AppName>
      </TitleBar>

      <TabStrip>
        <FileTab>文件(F)</FileTab>
        <RibbonTab $on>主页</RibbonTab>
        {tabs.map((t) => <RibbonTab key={t}>{t}</RibbonTab>)}
      </TabStrip>

      <Ribbon>
        <Group $w={217}>
          <GroupBody $pad={8}>
            <Btn w={56} label="创建刀具" icon={<IcoCreateTool />} />
            <Btn w={58} label="创建几何体" icon={<IcoCreateGeo />} />
            <Btn w={60} label="创建工序" icon={<IcoCreateOp />} />
            <SmallStack $w={26} $gap={9} $top={6}>
              <IcoSheetPlus />
              <IcoCrownPlus />
            </SmallStack>
          </GroupBody>
          <GroupFoot><GroupName>插入</GroupName><FootCaret /></GroupFoot>
        </Group>
        <GroupSep />
        <Group $w={54}>
          <GroupBody><Btn w={54} label="属性" icon={<IcoProps />} caret /></GroupBody>
          <GroupFoot><GroupName>操作</GroupName><FootCaret /></GroupFoot>
        </Group>
        <GroupSep />
        <Group $w={374}>
          <GroupBody $pad={6}>
            <Btn w={66} label="车削横断面" icon={<IcoSquare />} />
            <Btn w={50} label="生成刀轨" icon={<IcoGen />} />
            <Btn w={58} label="过切检查" icon={<IcoGouge />} />
            <Btn w={48} label="确认刀轨" icon={<IcoVerify />} />
            <Btn w={58} label="机床仿真" icon={<IcoSim />} />
            <Btn w={36} label="后处理" icon={<IcoPost />} />
            <Btn w={46} l={6} label="更多" icon={<IcoMoreOp />} caret />
          </GroupBody>
          <GroupFoot><GroupName>工序</GroupName><FootCaret /></GroupFoot>
        </Group>
        <GroupSep />
        <Group $w={249}>
          <GroupBody $pad={8}>
            <Btn w={52} on label="显示刀轨" icon={<IcoShowPath />} />
            <Btn w={52} label="刀轨报告" icon={<IcoReport />} />
            <SmallStack $w={46} $gap={8} $top={3} $pl={3}>
              <HatchBtn><IcoHatch /></HatchBtn>
              <CaretRow $gap={6}><IcoHolder /><Caret /></CaretRow>
            </SmallStack>
            <SmallStack $w={36} $gap={7} $top={3} $l={9}>
              <IcoUp />
              <IcoLayers />
              <IcoUp flip />
            </SmallStack>
            <Btn w={46} label="更多" icon={<IcoColors />} caret />
          </GroupBody>
          <GroupFoot><GroupName>显示</GroupName><FootCaret /></GroupFoot>
        </Group>
        <GroupSep />
        <Group $w={227}>
          <GroupBody>
            <PlayerCol>
              <Round kind="prev" />
              <CaretRow $gap={9}><Round kind="first" /><Caret /></CaretRow>
            </PlayerCol>
            <PlayerCol>
              <Round kind="pause" />
              <CaretRow $gap={9}><Round kind="last" /><Caret /></CaretRow>
            </PlayerCol>
            <PlayCol>
              <Round kind="play" size={32} />
              <PlayLabel>播放</PlayLabel>
            </PlayCol>
            <SpeedCol>
              <Track><Thumb /></Track>
              <SpeedLabel>速度</SpeedLabel>
            </SpeedCol>
          </GroupBody>
          <GroupFoot><GroupName $shift={12}>刀轨动画</GroupName></GroupFoot>
        </Group>
      </Ribbon>

      <Main>
        <Rail>
          {railItems.map(([h, ic, on], i) => <RailItem key={i} $h={h} $on={on}>{ic}</RailItem>)}
        </Rail>
        <NavPanel>
          <NavHead><span>工序导航器 - 几何</span><MaxBtn /></NavHead>
          <TreeTable>
            <HeadRow>
              <HeadCell $pad={6}>名称</HeadCell>
              <HeadCell $pad={6}>刀轨</HeadCell>
              <HeadCell $pad={6}>刀具</HeadCell>
            </HeadRow>
            {rows.map((r, i) => <TreeRow key={i} r={r} alt={i % 2 === 1} />)}
            {blanks.map((_, i) => (
              <Row key={i} $alt={(rows.length + i) % 2 === 1}>
                <NameCell $pad={0} />
                <StatusCell />
                <ToolCell />
              </Row>
            ))}
            <HScroll>
              <ChevronLeft size={16} strokeWidth={2.6} />
              <HThumb />
              <ScrollFill />
              <ChevronRight size={16} strokeWidth={2.6} />
            </HScroll>
          </TreeTable>
          <Splitter />
          <Section>相关性<ChevronDown size={18} color="#0f6a8c" strokeWidth={2.6} /></Section>
          <Section>细节<ChevronDown size={18} color="#0f6a8c" strokeWidth={2.6} /></Section>
        </NavPanel>
        <Viewport>
          <DocTabs>
            <DocTab $w={147}><IcoDocFlow c="#333" />冲洗水接头1.prt<IcoDoc c="#333" /></DocTab>
            <DocTab $w={166} $on><IcoDocFlow c="#fff" />STB-45-2-01 Z.prt<IcoDoc c="#fff" /><X size={13} color="#fff" strokeWidth={3} /></DocTab>
          </DocTabs>
          <Canvas><CadScene /></Canvas>
        </Viewport>
      </Main>
    </Page>
  );
}
